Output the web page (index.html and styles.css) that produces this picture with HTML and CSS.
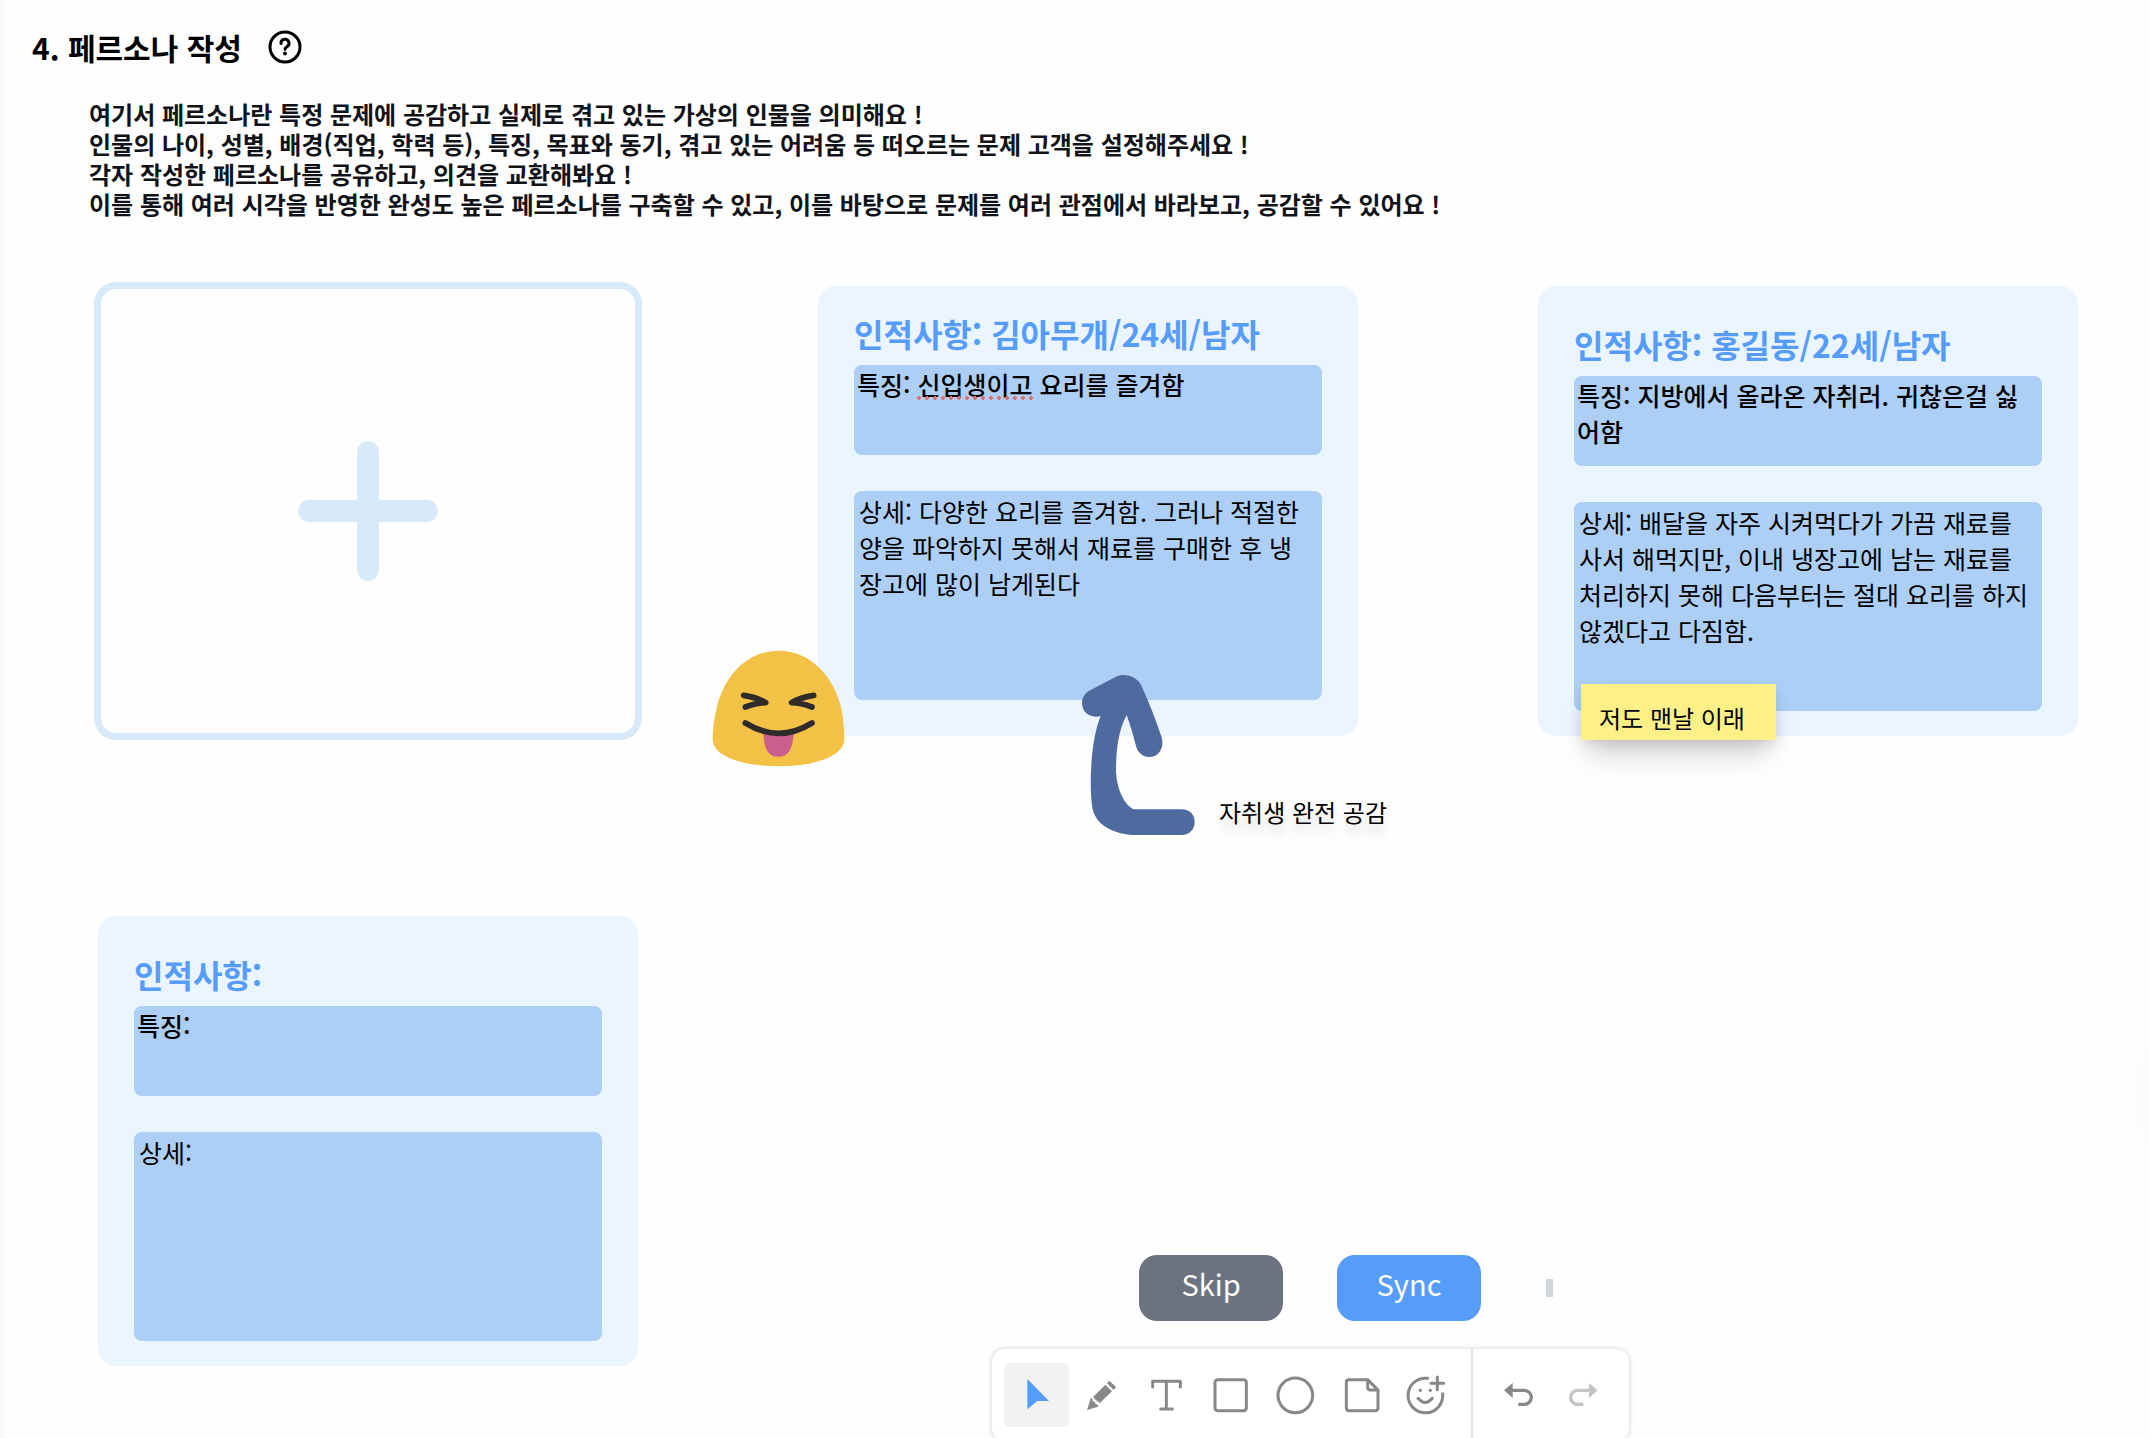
FILE: index.html
```html
<!DOCTYPE html>
<html lang="ko">
<head>
<meta charset="utf-8">
<title>페르소나 작성</title>
<meta name="viewport" content="width=device-width, initial-scale=1">
<link rel="stylesheet" href="styles.css">
</head>
<body>
<main class="board">
  <header class="intro">
    <div class="intro-heading">
      <h1 class="intro-title">4. 페르소나 작성</h1>
      <button class="help" type="button" aria-label="도움말">
        <svg viewBox="0 0 34 34" width="34" height="34" fill="none" stroke="currentColor" stroke-width="3" stroke-linecap="round">
          <circle cx="17" cy="17" r="15"/>
          <path d="M13 13.5a4 4 0 1 1 6 3.2c-1.400.9-2 1.500-2 2.500"/>
          <circle cx="17" cy="23.500" r="1.900" fill="currentColor" stroke="none"/>
        </svg>
      </button>
    </div>
    <p class="intro-text">여기서 페르소나란 특정 문제에 공감하고 실제로 겪고 있는 가상의 인물을 의미해요 !<br>인물의 나이, 성별, 배경(직업, 학력 등), 특징, 목표와 동기, 겪고 있는 어려움 등 떠오르는 문제 고객을 설정해주세요 !<br>각자 작성한 페르소나를 공유하고, 의견을 교환해봐요 !<br>이를 통해 여러 시각을 반영한 완성도 높은 페르소나를 구축할 수 있고, 이를 바탕으로 문제를 여러 관점에서 바라보고, 공감할 수 있어요 !</p>
  </header>

  <section class="cards">
    <button class="add-card" type="button" aria-label="페르소나 추가">
      <svg viewBox="0 0 140 140" width="140" height="140" stroke="currentColor" stroke-width="22" stroke-linecap="round">
        <path d="M70 11v118M11 70h118"/>
      </svg>
    </button>

    <article class="card card-compact">
      <input class="card-title" type="text" aria-label="인적사항" value="인적사항: 김아무개/24세/남자">
      <div class="field">
        <textarea class="traits" aria-label="특징" spellcheck="false">특징: 신입생이고 요리를 즐겨함</textarea>
        <span class="spelling"></span>
      </div>
      <textarea class="details" aria-label="상세" spellcheck="false">상세: 다양한 요리를 즐겨함. 그러나 적절한 양을 파악하지 못해서 재료를 구매한 후 냉장고에 많이 남게된다</textarea>

      <svg class="emoji" viewBox="0 0 480 420" role="img" aria-label="웃는 이모지">
        <path d="M236 32C335 32 403 114 424 205C430 237 433 270 433 298C433 350 340 379 236 379C132 379 38 350 38 298C38 265 42 235 50 205C70 114 137 32 236 32Z" fill="#f3c146"/>
        <path d="M190 278C192 310 196 350 236 350C274 350 278 310 282 278Z" fill="#cb5f8d"/>
        <g fill="none" stroke="#2e2b2a" stroke-width="17" stroke-linecap="round" stroke-linejoin="round">
          <path d="M136 249Q236 311 336 249"/>
          <path d="M131 166Q172 172 197 188Q172 188 136 201"/>
          <path d="M341 166Q300 172 275 188Q300 188 336 201"/>
        </g>
      </svg>
      <svg class="arrow" viewBox="0 0 390 540" aria-hidden="true">
        <path fill="#4f6a9f" d="M62 90L138 50C165 37 204 50 215 79C238 130 258 182 275 232C284 263 266 291 238 291C218 291 203 277 198 258C190 226 180 192 170 165C148 205 138 260 138 335C141 390 163 433 190 448H334C359 448 374 464 374 486C374 509 358 525 334 525H185C145 523 80 503 68 448C57 390 60 245 92 168C62 176 37 159 36 130C36 112 46 98 62 90Z"/>
      </svg>
      <p class="caption">자취생 완전 공감</p>
    </article>

    <article class="card">
      <input class="card-title" type="text" aria-label="인적사항" value="인적사항: 홍길동/22세/남자">
      <textarea class="traits" aria-label="특징" spellcheck="false">특징: 지방에서 올라온 자취러. 귀찮은걸 싫어함</textarea>
      <textarea class="details" aria-label="상세" spellcheck="false">상세: 배달을 자주 시켜먹다가 가끔 재료를 사서 해먹지만, 이내 냉장고에 남는 재료를 처리하지 못해 다음부터는 절대 요리를 하지 않겠다고 다짐함.</textarea>
      <p class="sticky">저도 맨날 이래</p>
    </article>

    <article class="card">
      <input class="card-title" type="text" aria-label="인적사항" value="인적사항:">
      <textarea class="traits" aria-label="특징" spellcheck="false">특징:</textarea>
      <textarea class="details" aria-label="상세" spellcheck="false">상세:</textarea>
    </article>
  </section>
</main>

<div class="dock">
  <div class="actions">
    <button class="action action-skip" type="button">Skip</button>
    <button class="action action-sync" type="button">Sync</button>
    <span class="handle"></span>
  </div>
  <div class="toolbar" role="toolbar" aria-label="그리기 도구">
    <div class="tool-group">
      <button class="tool tool-active" type="button" aria-label="선택">
        <svg viewBox="0 0 195 192"><path d="M70 48L135 114H100L70 139Z" fill="currentColor"/></svg>
      </button>
      <button class="tool" type="button" aria-label="펜">
        <svg viewBox="0 0 195 192" fill="currentColor"><path d="M121 53L141 72L134 81L114 61ZM109 65L129 85L92 121C91 115 87 115 83 116C84 111 81 109 77 110C78 106 75 103 72 102ZM66 104L70 107L71 115L78 117L80 123L88 127L87 131L54 141Z"/></svg>
      </button>
      <button class="tool" type="button" aria-label="텍스트">
        <svg viewBox="0 0 195 192" class="line"><path d="M56 72V55H139V72M97 55V138M80 138H115"/></svg>
      </button>
      <button class="tool" type="button" aria-label="사각형">
        <svg viewBox="0 0 195 192" class="line"><rect x="48" y="50" width="94" height="93" rx="8"/></svg>
      </button>
      <button class="tool" type="button" aria-label="원">
        <svg viewBox="0 0 195 192" class="line"><circle cx="94" cy="97" r="52"/></svg>
      </button>
      <button class="tool" type="button" aria-label="스티커 메모">
        <svg viewBox="0 0 195 192" class="line"><path d="M60 50H116L147 81V135Q147 143 139 143H60Q52 143 52 135V58Q52 50 60 50ZM116 50V73Q116 81 124 81H147"/></svg>
      </button>
      <button class="tool" type="button" aria-label="이모지">
        <svg viewBox="0 0 195 192" class="line"><path d="M101 46A52 52 0 1 0 146 92M72 106Q94 131 115 106M130 42V80M111 61H149"/><g fill="currentColor" stroke="none"><circle cx="79" cy="82" r="5"/><circle cx="109" cy="82" r="5"/></g></svg>
      </button>
    </div>
    <div class="tool-group">
      <button class="tool" type="button" aria-label="실행 취소">
        <svg viewBox="0 0 195 192"><path d="M54 82L80 60V105Z" fill="currentColor"/><path d="M78 82H115A21 21 0 0 1 115 124H97" fill="none" stroke="currentColor" stroke-width="10"/></svg>
      </button>
      <button class="tool" type="button" aria-label="다시 실행" disabled>
        <svg viewBox="0 0 195 192"><path d="M140 82L114 60V105Z" fill="currentColor"/><path d="M116 82H80A21 21 0 0 0 80 124H97" fill="none" stroke="currentColor" stroke-width="10"/></svg>
      </button>
    </div>
  </div>
</div>
</body>
</html>
```
FILE: styles.css
```css
* {
  box-sizing: border-box;
}

body {
  margin: 0;
  height: 100vh;
  position: relative;
  overflow: hidden;
  background: radial-gradient(circle at calc(100% + 79px) 76%, #fcfcfc 90px, #fefefe 110px);
  color: #000;
  font-family: "Noto Sans CJK KR", sans-serif;
  box-shadow: inset 6px 0 6px -4px rgba(0, 0, 0, 0.04);
}

button,
input,
textarea {
  font: inherit;
  color: inherit;
  border: 0;
  margin: 0;
  padding: 0;
  background: none;
}

h1,
p {
  margin: 0;
}

/* Heading and guide text */

.board {
  display: flex;
  flex-direction: column;
  gap: 67px;
  padding: 24px 72px 72px 32px;
}

.intro {
  display: flex;
  flex-direction: column;
  gap: 29px;
}

.intro-heading {
  display: flex;
  align-items: center;
  gap: 26px;
}

.intro-title {
  font-size: 30px;
  line-height: 46px;
  font-weight: 700;
}

.help {
  display: flex;
}

.intro-text {
  padding-left: 57px;
  font-size: 24px;
  line-height: 30px;
  font-weight: 700;
  color: #111318;
}

/* Persona cards */

.cards {
  display: grid;
  grid-template-columns: repeat(3, 1fr);
  gap: 180px;
  padding-left: 66px;
}

.add-card {
  display: flex;
  align-items: center;
  justify-content: center;
  margin: -4px;
  border: 7px solid #d8e9fa;
  border-radius: 22px;
  color: #d8e9fa;
}

.card {
  position: relative;
  display: flex;
  flex-direction: column;
  min-height: 450px;
  padding: 36px 36px 25px;
  border-radius: 18px;
  background: #eaf5ff;
}

.card-compact {
  padding-top: 25px;
}

.card-title {
  width: 100%;
  height: 44px;
  margin-bottom: 10px;
  font-size: 32px;
  font-weight: 700;
  color: #569cfa;
}

.field {
  position: relative;
  display: flex;
}

.traits,
.details {
  display: block;
  width: 100%;
  resize: none;
  overflow: hidden;
  border-radius: 8px;
  background: #adcff6;
  font-size: 25px;
  line-height: 36px;
}

.traits {
  height: 90px;
  padding: 1px 11px 1px 3px;
  font-weight: 500;
}

.details {
  height: 209px;
  margin-top: 36px;
  padding: 2px 11px 2px 5px;
}

.spelling {
  position: absolute;
  left: 63px;
  top: 31px;
  width: 116px;
  height: 4px;
  background: radial-gradient(circle at 2px 2px, #ee6a66 2px, transparent 2px) 0 0 / 8px 4px;
}

/* Reactions placed on the board */

.emoji {
  position: absolute;
  left: -118px;
  top: 354px;
  width: 160px;
  height: 140px;
}

.arrow {
  position: absolute;
  left: 252px;
  top: 374px;
  width: 130px;
  height: 180px;
}

.caption {
  position: absolute;
  left: 401px;
  top: 508px;
  font-size: 24px;
  line-height: 36px;
  white-space: nowrap;
  text-shadow: 0 10px 12px rgba(0, 0, 0, 0.15);
}

.sticky {
  position: absolute;
  left: 43px;
  top: 398px;
  width: 195px;
  padding: 16px 18px 4px;
  background: #fdf086;
  font-size: 24px;
  line-height: 36px;
  white-space: nowrap;
  box-shadow: 0 20px 30px -8px rgba(0, 0, 0, 0.2), 0 4px 12px rgba(0, 0, 0, 0.1);
}

/* Bottom dock */

.dock {
  position: absolute;
  left: 991px;
  bottom: -4px;
  display: flex;
  flex-direction: column;
  gap: 27px;
}

.actions {
  display: flex;
  align-items: center;
  padding-left: 148px;
}

.action {
  width: 144px;
  height: 66px;
  margin-right: 54px;
  padding-bottom: 10px;
  border-radius: 18px;
  font-size: 29px;
  color: #fff;
}

.action-skip {
  background: #6c7280;
}

.action-sync {
  background: #569cfa;
}

.handle {
  width: 7px;
  height: 18px;
  margin-left: 11px;
  background: #d1d5db;
}

.toolbar {
  display: flex;
  border: 1px solid #ececec;
  border-radius: 14px;
  background: #fff;
  box-shadow: 0 0 4px rgba(0, 0, 0, 0.14);
}

.tool-group {
  display: flex;
  padding: 14px 12px;
}

.tool-group + .tool-group {
  padding: 14px 13px;
  border-left: 2px solid #e4e4e4;
}

.tool {
  display: flex;
  width: 65px;
  height: 64px;
  border-radius: 6px;
  color: #888;
}

.tool svg {
  width: 100%;
  height: 100%;
}

.tool-active {
  background: #f2f2f2;
  color: #569cfa;
}

.tool:disabled {
  color: #c4c4c4;
}

.line {
  fill: none;
  stroke: currentColor;
  stroke-width: 9;
  stroke-linecap: round;
  stroke-linejoin: round;
}
```
